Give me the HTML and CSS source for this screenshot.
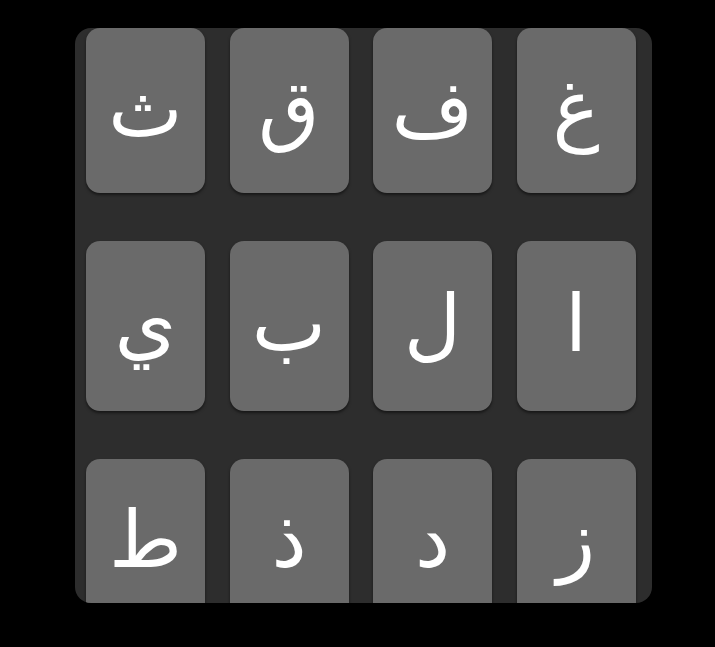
FILE: index.html
```html
<!DOCTYPE html>
<html lang="ar">
<head>
<meta charset="utf-8">
<link rel="stylesheet" href="styles.css">
</head>
<body>
<div class="panel">
  <div class="keys">
    <div class="key first">ث</div>
    <div class="key first">ق</div>
    <div class="key first">ف</div>
    <div class="key first">غ</div>
    <div class="key">ي</div>
    <div class="key">ب</div>
    <div class="key">ل</div>
    <div class="key">ا</div>
    <div class="key last">ط</div>
    <div class="key last">ذ</div>
    <div class="key last">د</div>
    <div class="key last">ز</div>
  </div>
</div>
</body>
</html>
```
FILE: styles.css
```css
html, body {
  margin: 0;
  background: #000;
}
body {
  padding: 28px 0 0 75px;
  height: 647px;
  box-sizing: border-box;
  overflow: hidden;
}
.panel {
  width: 577px;
  height: 575px;
  background: #2d2d2d;
  border-radius: 16px;
  overflow: hidden;
  box-sizing: border-box;
  padding-left: 11px;
}
.keys {
  display: grid;
  grid-template-columns: repeat(4, 119px);
  grid-template-rows: 165px 170px 170px;
  column-gap: 24.5px;
  row-gap: 48px;
}
.key {
  background: #6a6a6a;
  border-radius: 14px;
  box-shadow: 0 2px 3px rgba(0, 0, 0, 0.5);
  color: #fff;
  font-family: "DejaVu Sans", sans-serif;
  font-size: 79px;
  line-height: 1;
  text-align: center;
  padding-top: 44px;
  box-sizing: border-box;
}
.first {
  padding-top: 42px;
}
.last {
  padding-top: 42px;
}
```
